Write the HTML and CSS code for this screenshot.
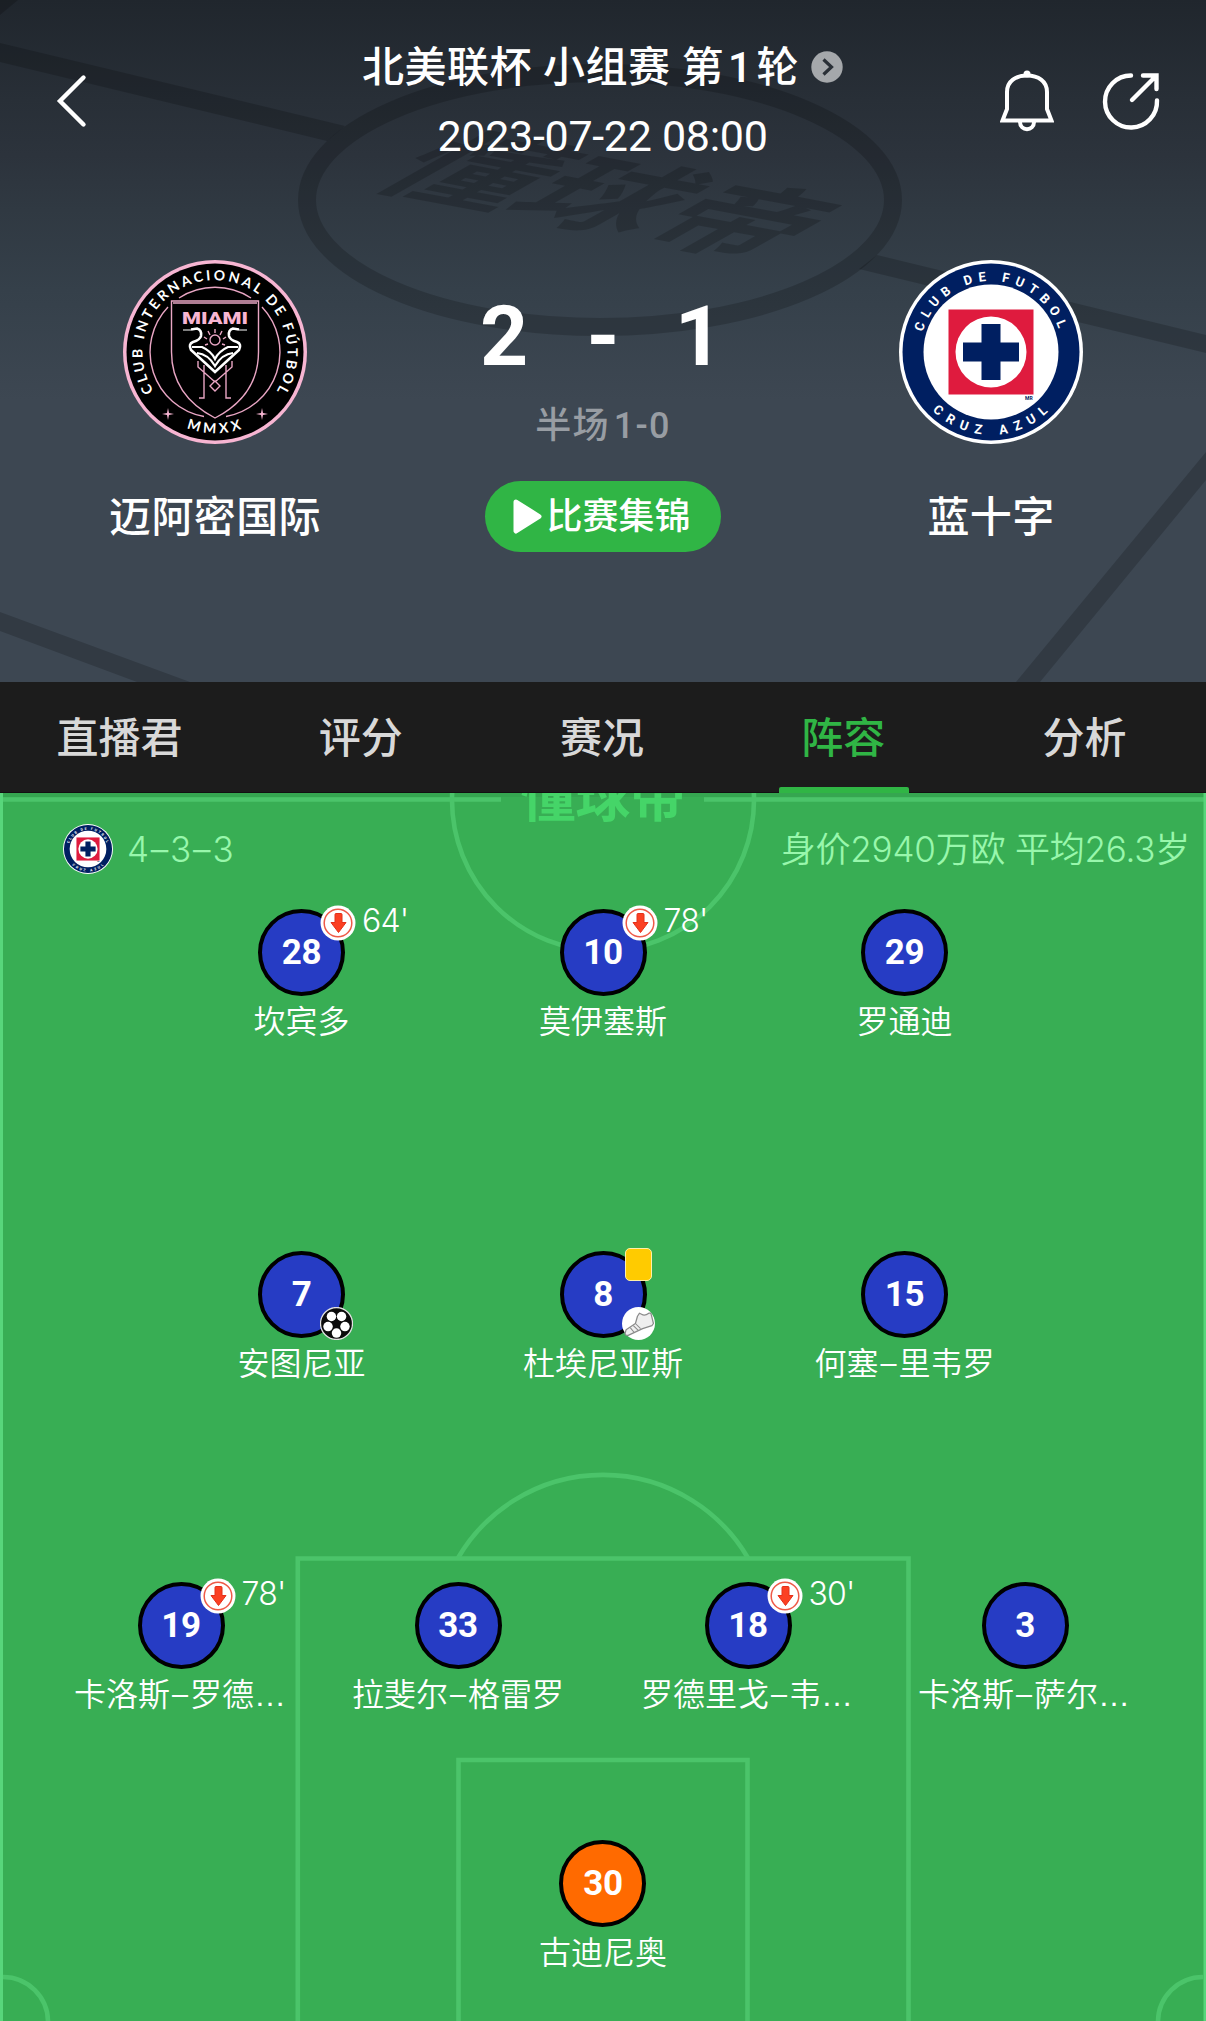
FILE: index.html
```html
<!DOCTYPE html>
<html lang="zh-CN">
<head>
  <meta charset="UTF-8">
  <meta name="viewport" content="width=device-width, initial-scale=1.0">
  <title>迈阿密国际 2 - 1 蓝十字</title>
  <link rel="stylesheet" href="styles.css">
</head>
<body>
  <!-- Shared symbols -->
  <svg class="defs" width="0" height="0">
    <symbol id="cruz-azul" viewBox="-92 -92 184 184">
      <circle r="92" fill="#fff"/>
      <circle r="88.5" fill="#001f61"/>
      <circle r="67.5" fill="#fff"/>
      <rect x="-42.5" y="-42.5" width="85" height="85" fill="#df1b3e"/>
      <circle r="35.5" fill="#fff"/>
      <path d="M-9.500-28H9.500V-9.500H28V9.500H9.500V28H-9.500V9.500H-28V-9.500H-9.500Z" fill="#001f61"/>
      <path id="cruz-top" d="M-68.500-20A71.400 71.400 0 0 1 68.500-20" fill="none"/>
      <path id="cruz-bottom" d="M-58.500 58.500A82.700 82.700 0 0 0 58.500 58.500" fill="none"/>
      <text class="crest-text cruz-text"><textPath href="#cruz-top" textLength="180">CLUB DE FUTBOL</textPath></text>
      <text class="crest-text cruz-text"><textPath href="#cruz-bottom" textLength="128">CRUZ AZUL</textPath></text>
      <text class="crest-mr" x="34" y="48">MR</text>
    </symbol>
    <symbol id="sub-out" viewBox="0 0 36 36">
      <circle cx="18" cy="18" r="17.500" fill="#fff"/>
      <circle cx="18" cy="18" r="13.800" fill="none" stroke="#ee5a48" stroke-width="1.500"/>
      <path d="M15 9.500Q15 8.500 16 8.500H21Q22 8.500 22 9.500V17.500H26L18.500 27.500L11 17.500H15Z" fill="#fb4023" stroke="#e4301a" stroke-linejoin="round"/>
    </symbol>
    <symbol id="goal" viewBox="-16 -16 32 32">
      <circle r="15.500" fill="#0b0b0b" stroke="#e2e2e2" stroke-width="1.200"/>
      <g fill="#fff">
        <circle cx="-4.900" cy="-6.800" r="4.600"/>
        <circle cx="4.900" cy="-6.800" r="4.600"/>
        <circle cx="8.200" cy="3" r="4.600"/>
        <circle cx="0" cy="9.300" r="4.600"/>
        <circle cx="-8.200" cy="3" r="4.600"/>
      </g>
      <path d="M0-4L4-1L2.500 4H-2.500L-4-1Z" fill="#0b0b0b"/>
    </symbol>
    <symbol id="assist" viewBox="-16 -16 32 32">
      <circle r="16" fill="#fff"/>
      <path d="M-13 9.500L-12 6L-3 0L-1-7L1-10L3-9Q6-7 10-10L12-10L14.500 0L13 2L4 5L-10 11.500Q-13 12-13 9.500Z" fill="#efefef" stroke="#8b8b8b" stroke-width="1.200" stroke-linejoin="round"/>
      <path d="M-8 4L-4 9M-5 2L0 7M-3 0L2 5" fill="none" stroke="#8b8b8b"/>
    </symbol>
  </svg>

  <header class="match">
    <svg class="match-bg" viewBox="0 0 1206 682">
      <g fill="#000" fill-opacity="0.18">
        <path d="M0 0H18L0 15Z"/>
        <path d="M0 43L345 126L327 141L0 62Z"/>
        <path d="M877 255L1206 335V353L859 269Z"/>
        <path d="M0 612L190 682H137L0 631Z"/>
        <path d="M1206 452V480L1040 682H1016Z"/>
        <text class="bg-mark" transform="matrix(1.33 .25 -1.2 .68 366 184)">懂球帝</text>
      </g>
      <ellipse cx="600" cy="200" rx="293" ry="127" fill="none" stroke="#000" stroke-opacity="0.18" stroke-width="18"/>
    </svg>

    <div class="match-nav">
      <svg class="icon-back" viewBox="0 0 32 56"><path d="M28.500 4.500L5 28L28.500 51.500"/></svg>
      <div class="match-meta">
        <div class="match-title">
          <span>北美联杯 小组赛 第<span class="round">1</span>轮</span>
          <svg class="icon-more" viewBox="0 0 32 32">
            <circle cx="16" cy="16" r="15.700" fill="#a5a8ab"/>
            <path d="M12.500 8.500L20.500 16L12.500 23.500" fill="none" stroke="#2a3037" stroke-width="3.200"/>
          </svg>
        </div>
        <div class="match-date">2023-07-22 08:00</div>
      </div>
      <div class="match-actions">
        <svg class="icon-bell" viewBox="0 0 54 62">
          <path d="M7 39V22C7 11 16 5.500 27 5.500S47 11 47 22V39L51.500 50.500H2.500Z"/>
          <path d="M20 52C20 61.500 34 61.500 34 52"/>
          <circle cx="27" cy="4" r="3.500"/>
        </svg>
        <svg class="icon-share" viewBox="0 0 58 58">
          <path d="M29 3.500A26 26 0 1 0 55 28.500"/>
          <path d="M30 28L54 4M41 3.500H54.500V17"/>
        </svg>
      </div>
    </div>

    <div class="scoreboard">
      <div class="team">
        <svg class="crest" viewBox="-92 -92 184 184">
          <circle r="92" fill="#f7b5d2"/>
          <circle r="88.500" fill="#000"/>
          <g fill="none" stroke="#e9a6c4" stroke-width="1.400">
            <path d="M-36-54A65.500 65.500 0 0 1 36-54M47-45A65.500 65.500 0 0 1 11 64.500M-47-45A65.500 65.500 0 0 0-11 64.500"/>
            <path d="M-43.500-51H43.500V0C43.500 32 25 53 0 66C-25 53-43.500 32-43.500 0Z"/>
            <path d="M-42-49H42"/>
            <path d="M-17 9V15L0 30M17 9V15L0 30M-11 13V46H-16M11 13V46H16M0 29L5 34L0 39L-5 34Z"/>
            <circle cy="-12" r="5"/>
            <path d="M0-19V-23M-5-17L-7-21M5-17L7-21M-8-13L-11-15M8-13L11-15M-7-8L-10-7M7-8L10-7"/>
          </g>
          <g fill="none" stroke="#fff" stroke-width="2.600">
            <path d="M-24-22.500L-18-23.500Q-13-22-14-16Q-15-12-22-10Q-27-8-24-2L0 20L24-2Q27-8 22-10Q15-12 14-16Q13-22 18-23.500L24-22.500"/>
            <path d="M-23-5H-13Q-4-1 0 7Q4-1 13-5H23M-18 1Q-7 2 0 14Q7 2 18 1" stroke-width="2.200"/>
            <path d="M-32-22H-24M24-22H32" stroke-width="1.200"/>
          </g>
          <path d="M-47 56L-46 61L-41 62L-46 63L-47 68L-48 63L-53 62L-48 61ZM47 56L48 61L53 62L48 63L47 68L46 63L41 62L46 61Z" fill="#f7b5d2"/>
          <text class="crest-miami" x="0" y="-28" textLength="66" lengthAdjust="spacingAndGlyphs">MIAMI</text>
          <path id="miami-top" d="M-61.500 39A72.500 72.500 0 1 1 61.500 39" fill="none"/>
          <path id="miami-bottom" d="M-28.500 76A81.500 81.500 0 0 0 28.500 76" fill="none"/>
          <text class="crest-text"><textPath href="#miami-top" textLength="308">CLUB INTERNACIONAL DE FÚTBOL</textPath></text>
          <text class="crest-text"><textPath href="#miami-bottom" textLength="56">MMXX</textPath></text>
        </svg>
        <div class="team-name">迈阿密国际</div>
      </div>

      <div class="result">
        <div class="score"><span>2</span><span class="vs">-</span><span>1</span></div>
        <div class="half">半场<span class="half-score">1-0</span></div>
        <a class="highlights">
          <svg class="icon-play" viewBox="0 0 29 35"><path d="M3 3L26 17.500L3 32Z"/></svg>
          <span class="highlights-label">比赛集锦</span>
        </a>
      </div>

      <div class="team">
        <svg class="crest"><use href="#cruz-azul"/></svg>
        <div class="team-name">蓝十字</div>
      </div>
    </div>
  </header>

  <nav class="tabs">
    <a class="tab">直播君</a>
    <a class="tab">评分</a>
    <a class="tab">赛况</a>
    <a class="tab active">阵容</a>
    <a class="tab">分析</a>
  </nav>

  <main class="pitch">
    <!-- Field markings -->
    <svg class="pitch-lines" viewBox="0 0 1206 1228">
      <rect width="1206" height="4" fill="#35a650"/>
      <g fill="none" stroke="#4bc46a" stroke-width="4.600">
        <path d="M3 6.500H501M704 6.500H1204"/>
        <circle cx="603" cy="7" r="151"/>
        <path d="M458 765A168 168 0 0 1 748 765"/>
        <path d="M297.800 1230V765.500H908.500V1230M458.500 1230V967H747.500V1230"/>
        <path d="M3 1184A45 45 0 0 1 48 1229M1203 1184A45 45 0 0 0 1158 1229"/>
      </g>
      <path d="M1.500 0V1228M1205 0V1228" stroke="#58d67b" stroke-width="3"/>
      <text class="pitch-mark" x="603" y="23">懂球帝</text>
    </svg>

    <div class="lineup-head">
      <svg class="crest-small"><use href="#cruz-azul"/></svg>
      <span class="formation">4–3–3</span>
      <span class="summary">身价2940万欧 平均26.3岁</span>
    </div>

    <div class="line forwards">
      <div class="player">
        <div class="shirt">28<svg class="badge sub"><use href="#sub-out"/></svg><span class="minute">64'</span></div>
        <div class="name">坎宾多</div>
      </div>
      <div class="player">
        <div class="shirt">10<svg class="badge sub"><use href="#sub-out"/></svg><span class="minute">78'</span></div>
        <div class="name">莫伊塞斯</div>
      </div>
      <div class="player">
        <div class="shirt">29</div>
        <div class="name">罗通迪</div>
      </div>
    </div>

    <div class="line midfielders">
      <div class="player">
        <div class="shirt">7<svg class="badge event"><use href="#goal"/></svg></div>
        <div class="name">安图尼亚</div>
      </div>
      <div class="player">
        <div class="shirt">8<span class="badge card"></span><svg class="badge event"><use href="#assist"/></svg></div>
        <div class="name">杜埃尼亚斯</div>
      </div>
      <div class="player">
        <div class="shirt">15</div>
        <div class="name">何塞<span class="dash">–</span>里韦罗</div>
      </div>
    </div>

    <div class="line defenders">
      <div class="player">
        <div class="shirt">19<svg class="badge sub"><use href="#sub-out"/></svg><span class="minute">78'</span></div>
        <div class="name">卡洛斯<span class="dash">–</span>罗德<span class="dots">…</span></div>
      </div>
      <div class="player">
        <div class="shirt">33</div>
        <div class="name">拉斐尔<span class="dash">–</span>格雷罗</div>
      </div>
      <div class="player">
        <div class="shirt">18<svg class="badge sub"><use href="#sub-out"/></svg><span class="minute">30'</span></div>
        <div class="name">罗德里戈<span class="dash">–</span>韦<span class="dots">…</span></div>
      </div>
      <div class="player">
        <div class="shirt">3</div>
        <div class="name">卡洛斯<span class="dash">–</span>萨尔<span class="dots">…</span></div>
      </div>
    </div>

    <div class="line keeper">
      <div class="player">
        <div class="shirt">30</div>
        <div class="name">古迪尼奥</div>
      </div>
    </div>
  </main>
</body>
</html>
```

FILE: styles.css
```css
* {
  box-sizing: border-box;
}
body {
  margin: 0;
  width: 1206px;
  height: 2021px;
  overflow: hidden;
  font-family: Roboto, 'Noto Sans CJK SC', sans-serif;
  color: #fff;
}
svg {
  display: block;
  flex: none;
}
.defs {
  position: absolute;
}

/* Match header */
.match {
  position: relative;
  height: 682px;
  background: linear-gradient(#20262d 0, #282f37 100px, #2c333c 155px, #303942 210px, #35404a 290px, #3d4752 400px, #3d4752 100%);
}
.match-bg {
  position: absolute;
  top: 0;
  left: 0;
  width: 1206px;
  height: 682px;
}
.bg-mark {
  font-family: 'Noto Sans CJK SC', sans-serif;
  font-size: 100px;
  font-weight: 700;
}
.match-nav {
  position: relative;
  display: flex;
  justify-content: space-between;
  align-items: flex-start;
  height: 260px;
  padding: 36px 46px 0 55px;
}
.icon-back {
  width: 32px;
  height: 56px;
  margin: 37px 118px 0 0;
}
.icon-back path,
.icon-bell path,
.icon-share path {
  fill: none;
  stroke: #fff;
  stroke-width: 4.4;
  stroke-linecap: round;
}
.icon-bell path {
  stroke-width: 4;
}
.icon-bell circle {
  fill: #fff;
}
.match-meta {
  display: flex;
  flex-direction: column;
  align-items: center;
}
.match-title {
  display: flex;
  align-items: center;
  height: 62px;
  font-size: 42px;
  font-weight: 500;
  line-height: 62px;
  letter-spacing: 0.5px;
  white-space: nowrap;
}
.match-title > span {
  padding-top: 2px;
}
.round {
  margin: 0 4px;
}
.icon-more {
  width: 32px;
  height: 32px;
  margin-left: 12px;
}
.match-date {
  margin-top: 8px;
  font-size: 43px;
  line-height: 60px;
  letter-spacing: -0.3px;
}
.match-actions {
  display: flex;
  gap: 48px;
  margin-top: 34px;
}
.icon-bell {
  width: 54px;
  height: 62px;
}
.icon-share {
  width: 58px;
  height: 58px;
  margin-top: 2px;
}

.scoreboard {
  position: relative;
  display: flex;
  justify-content: space-between;
}
.team {
  display: flex;
  flex-direction: column;
  align-items: center;
  width: 430px;
}
.crest {
  width: 184px;
  height: 184px;
}
.team-name {
  margin-top: 44px;
  font-size: 42px;
  font-weight: 500;
  line-height: 60px;
  letter-spacing: 0.4px;
}
.crest-text {
  fill: #fff;
  font-family: Lato, sans-serif;
  font-size: 14px;
  font-weight: 700;
}
.cruz-text {
  font-family: Roboto, sans-serif;
  font-size: 13px;
}
.crest-mr {
  fill: #001f61;
  font-size: 5px;
  font-weight: 700;
}
.crest-miami {
  fill: #f7b5d2;
  font-family: Roboto, sans-serif;
  font-size: 16px;
  font-weight: 900;
  text-anchor: middle;
}
.result {
  display: flex;
  flex-direction: column;
  align-items: center;
}
.score {
  display: flex;
  justify-content: space-between;
  width: 246px;
  margin-top: 27px;
  padding-right: 3px;
  font-size: 84px;
  font-weight: 700;
  line-height: 100px;
}
.vs {
  margin-left: 3px;
}
.half {
  margin-top: 14px;
  font-size: 36px;
  font-weight: 500;
  line-height: 50px;
  letter-spacing: 1.3px;
  color: #989da3;
}
.half-score {
  margin-left: 4px;
}
.highlights {
  display: flex;
  align-items: center;
  justify-content: center;
  gap: 6px;
  width: 236px;
  height: 71px;
  margin-top: 30px;
  border-radius: 36px;
  background-color: #30b545;
  font-size: 36px;
  font-weight: 500;
}
.highlights-label {
  line-height: 50px;
  margin: 0 2px 0 -2px;
}
.icon-play {
  width: 29px;
  height: 35px;
}
.icon-play path {
  fill: #fff;
  stroke: #fff;
  stroke-width: 5;
  stroke-linejoin: round;
}

/* Tabs */
.tabs {
  display: grid;
  grid-template-columns: repeat(5, 1fr);
  height: 111px;
  background-color: #1c1c1c;
  border-bottom: 1px solid #111;
}
.tab {
  position: relative;
  padding-right: 2px;
  text-align: center;
  font-size: 42px;
  font-weight: 500;
  line-height: 114px;
  color: #d8d8d8;
}
.tab.active {
  color: #30b545;
}
.tab.active::after {
  content: '';
  position: absolute;
  left: 55px;
  top: 105px;
  width: 130px;
  height: 6px;
  border-radius: 2px 2px 0 0;
  background-color: #30b545;
}

/* Pitch */
.pitch {
  position: relative;
  height: 1228px;
  overflow: hidden;
  background-color: #38ae54;
  font-family: Inter, 'Noto Sans CJK SC', sans-serif;
}
.pitch-lines {
  position: absolute;
  top: 0;
  left: 0;
  width: 1206px;
  height: 1228px;
}
.pitch-mark {
  fill: #45d568;
  font-size: 55px;
  font-weight: 700;
  text-anchor: middle;
}
.lineup-head {
  position: relative;
  display: flex;
  align-items: center;
  height: 112px;
  padding: 0 16px 0 63px;
  font-size: 35px;
  font-weight: 350;
  color: #98f7ac;
}
.crest-small {
  width: 50px;
  height: 50px;
}
.formation {
  margin-left: 14px;
  letter-spacing: 1.8px;
}
.summary {
  margin: 0 0 5px auto;
  letter-spacing: -0.2px;
}
.line {
  position: relative;
  display: grid;
  justify-content: center;
  height: 152px;
}
.forwards,
.midfielders {
  grid-template-columns: repeat(3, 301.5px);
}
.forwards {
  margin-top: 4px;
}
.midfielders {
  margin-top: 190px;
}
.defenders {
  grid-template-columns: 264px 290px 290px 264px;
  margin-top: 179px;
}
.keeper {
  margin-top: 106px;
}
.player {
  display: flex;
  flex-direction: column;
  align-items: center;
}
.shirt {
  position: relative;
  width: 87px;
  height: 87px;
  border: 4.5px solid #000;
  border-radius: 50%;
  background-color: #263cc4;
  font-family: Roboto, sans-serif;
  font-size: 35px;
  font-weight: 700;
  line-height: 80px;
  letter-spacing: -0.4px;
  text-align: center;
}
.keeper .shirt {
  background-color: #ff6a00;
}
.name {
  margin-top: 1px;
  font-size: 32px;
  line-height: 49px;
  font-weight: 350;
  white-space: nowrap;
}
.dash {
  margin: 0 2px;
}
.dots {
  margin-right: 2px;
  font-family: 'Liberation Sans', sans-serif;
}
.badge {
  position: absolute;
}
.sub {
  top: -8px;
  left: 58px;
  width: 36px;
  height: 36px;
}
.minute {
  position: absolute;
  top: -12px;
  left: 100px;
  font-family: Inter, sans-serif;
  font-size: 32px;
  font-weight: 300;
  line-height: 40px;
  letter-spacing: -0.8px;
}
.event {
  left: 58px;
  top: 52px;
  width: 33px;
  height: 33px;
}
.card {
  left: 61px;
  top: -7px;
  width: 27px;
  height: 33px;
  border: 1.5px solid #fff0a8;
  border-radius: 5px;
  background-color: #ffcb00;
}
```
